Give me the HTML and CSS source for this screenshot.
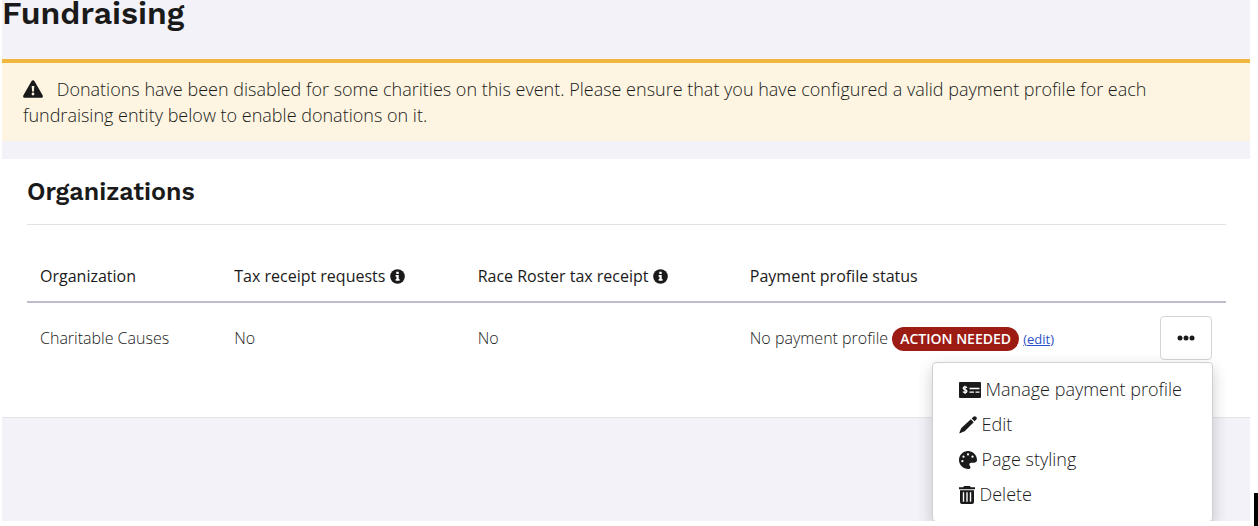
FILE: index.html
```html
<!DOCTYPE html>
<html lang="en">
    <head>
        <meta charset="utf-8">
        <title>Fundraising</title>
        <link rel="stylesheet" href="styles.css">
    </head>
    <body>
        <div class="page">
            <h1 class="page-title">Fundraising</h1>
            <div class="alert">
                <svg class="icon-warning" viewBox="0 0 20 18"><path fill="#1a1a1a" d="M10 0.2c.6 0 1.1.3 1.4.8l8.2 14.2c.7 1.2-.1 2.6-1.4 2.6H1.800c-1.300 0-2.100-1.400-1.400-2.600L8.600 1c.3-.5.8-.8 1.400-.8z"/><path fill="#fdf5e1" d="M8.700 6h2.600l-.4 5.600H9.100z"/><circle fill="#fdf5e1" cx="10" cy="14" r="1.400"/></svg>
                Donations have been disabled for some charities on this event. Please ensure that you have configured a valid payment profile for each fundraising entity below to enable donations on it.
            </div>
            <div class="panel">
                <h2 class="panel-title">Organizations</h2>
                <table class="org-table">
                    <thead>
                        <tr>
                            <th class="col-org">Organization</th>
                            <th class="col-tax">Tax receipt requests <svg class="icon-info" viewBox="0 0 16 16"><circle cx="8" cy="8" r="7.800" fill="#1a1a1a"/><path fill="#fff" d="M6.700 3h2.600v2.300H6.700zM6 6.500h3.300v4.200h.9v1.800H6v-1.800h.9V8.300H6z"/></svg></th>
                            <th class="col-receipt">Race Roster tax receipt <svg class="icon-info" viewBox="0 0 16 16"><circle cx="8" cy="8" r="7.800" fill="#1a1a1a"/><path fill="#fff" d="M6.700 3h2.600v2.300H6.700zM6 6.500h3.300v4.200h.9v1.800H6v-1.800h.9V8.300H6z"/></svg></th>
                            <th>Payment profile status</th>
                            <th class="col-actions"></th>
                        </tr>
                    </thead>
                    <tbody>
                        <tr>
                            <td>Charitable Causes</td>
                            <td>No</td>
                            <td>No</td>
                            <td>No payment profile <span class="badge">ACTION NEEDED</span> <a class="edit-link" href="#">(edit)</a></td>
                            <td class="col-actions">
                                <div class="dropdown">
                                    <button class="btn-more" type="button" aria-label="Actions">
                                        <svg class="icon-dots" viewBox="0 0 18 6"><circle cx="3" cy="3" r="2.500"/><circle cx="9" cy="3" r="2.500"/><circle cx="15" cy="3" r="2.500"/></svg>
                                    </button>
                                    <div class="menu">
                                        <a class="menu-item" href="#"><svg class="icon-check" viewBox="0 0 22 16"><path fill="#1a1a1a" d="M1 0h20q1 0 1 1v14q0 1-1 1H1q-1 0-1-1V1q0-1 1-1z"/><path fill="none" stroke="#fff" stroke-width="1.300" d="M8 5.700c-.6-.6-1.300-.8-2-.8-1.100 0-1.800.5-1.800 1.300 0 2 3.700 1 3.700 3 0 .9-.8 1.400-1.900 1.400-.9 0-1.600-.3-2.100-.9M6 3.700v8.300M10.500 6.500h10M10.500 10.200h4.500M16.500 10.200h4"/></svg> Manage payment profile</a>
                                        <a class="menu-item" href="#"><svg class="icon-18" viewBox="0 0 512 512"><path d="M410 20c20-20 52-20 72 0l10 10c20 20 20 52 0 72l-50 50-82-82zM337 93l82 82-250 250c-9 9-20 15-32 19L26 490c-10 3-18-5-15-15l44-112c5-12 11-23 20-32z"/></svg> Edit</a>
                                        <a class="menu-item" href="#"><svg class="icon-18" viewBox="0 0 512 512"><path fill-rule="evenodd" d="M512 256c0 52-40 78-92 78h-76c-28 0-50 22-50 50 0 34 32 46 32 78 0 30-24 50-60 50C118 512 0 398 0 256S115 0 256 0s256 115 256 256zM96 256a32 32 0 1 0 0 64 32 32 0 0 0 0-64zM128 128a32 32 0 1 0 0 64 32 32 0 0 0 0-64zM256 64a32 32 0 1 0 0 64 32 32 0 0 0 0-64zM384 128a32 32 0 1 0 0 64 32 32 0 0 0 0-64z"/></svg> Page styling</a>
                                        <a class="menu-item" href="#"><svg class="icon-trash" viewBox="0 0 16 18"><path d="M5 0h6l.7 1.200H16v2H0v-2h4.300z"/><path fill-rule="evenodd" d="M1 4.200h14V16q0 2-2 2H3q-2 0-2-2zM3.800 6.200v9.500h1.400V6.200zM7.300 6.200v9.500h1.400V6.200zM10.800 6.200v9.500h1.400V6.200z"/></svg> Delete</a>
                                    </div>
                                </div>
                            </td>
                        </tr>
                    </tbody>
                </table>
            </div>
        </div>
        <div class="edge-mark"></div>
    </body>
</html>
```
FILE: styles.css
```css
html, body {
    height: 100%;
    margin: 0;
    overflow: hidden;
    background: #fff;
}
body {
    font-family: "Open Sans", "Noto Sans", sans-serif;
    font-size: 18px;
    font-weight: 300;
    line-height: 26px;
    color: #1a1a1a;
}
svg {
    fill: #1a1a1a;
}
.page {
    height: calc(100vh - 5px);
    margin: 0 8px 0 2px;
    overflow: hidden;
    background: #f3f2f8;
}
.page-title, .panel-title {
    margin: 0;
    font-family: "Work Sans", Inter, sans-serif;
    font-weight: 600;
    color: #1a1a1a;
}
.page-title {
    padding-bottom: 33px;
    font-size: 32px;
    line-height: 26px;
}
.alert {
    padding: 13px 21px;
    border-top: 4px solid #efb73e;
    background: #fdf5e1;
}
.icon-warning {
    width: 20px;
    height: 18px;
    margin-right: 9px;
    vertical-align: -2px;
}
.panel {
    margin-top: 18px;
    padding: 17px 24px 44px 25px;
    border-bottom: 1px solid #e4e3e8;
    background: #fff;
}
.panel-title {
    padding-bottom: 16px;
    border-bottom: 1px solid #e2e2e4;
    font-size: 25px;
    line-height: 32px;
}
.org-table {
    width: 100%;
    margin-top: 26px;
    border-collapse: collapse;
    table-layout: fixed;
    font-size: 16px;
    line-height: 24px;
}
.org-table th, .org-table td {
    box-sizing: border-box;
    padding: 13px;
    text-align: left;
    vertical-align: middle;
}
.org-table th {
    border-bottom: 2px solid #bfbdcb;
    font-weight: 500;
    color: #1a1a1a;
}
.org-table .col-org {
    width: 16.2%;
}
.org-table .col-tax {
    width: 20.3%;
}
.org-table .col-receipt {
    width: 22.7%;
}
.org-table .col-actions {
    width: 79px;
}
.icon-info {
    width: 15px;
    height: 15px;
    vertical-align: -2px;
}
.badge {
    display: inline-block;
    padding: 0 8px;
    border-radius: 12px;
    background: #9c1c14;
    color: #fff;
    font-size: 14px;
    font-weight: 600;
}
.edit-link {
    color: #2b50c8;
    font-size: 13px;
    font-weight: 400;
}
.dropdown {
    position: relative;
}
.btn-more {
    display: flex;
    align-items: center;
    justify-content: center;
    width: 52px;
    height: 44px;
    padding: 0;
    border: 1px solid #d5d5d5;
    border-radius: 4px;
    background: #fff;
}
.icon-dots {
    width: 18px;
    height: 6px;
}
.menu {
    position: absolute;
    top: 100%;
    right: 0;
    margin-top: 2px;
    padding: 9px 0;
    border: 1px solid #d0d0d0;
    border-radius: 4px;
    background: #fff;
    box-shadow: 0 6px 16px rgba(0, 0, 0, 0.2);
    font-size: 18px;
}
.menu-item {
    display: block;
    padding: 0 30px 0 26px;
    line-height: 35px;
    color: #1a1a1a;
    text-decoration: none;
    white-space: nowrap;
}
.icon-check {
    width: 22px;
    height: 16px;
    vertical-align: -2px;
}
.icon-18 {
    width: 18px;
    height: 18px;
    vertical-align: -3px;
}
.icon-trash {
    width: 16px;
    height: 18px;
    vertical-align: -3px;
}
.edge-mark {
    position: fixed;
    right: 0;
    bottom: 0;
    width: 4px;
    height: 33px;
    background: #000;
}
```
